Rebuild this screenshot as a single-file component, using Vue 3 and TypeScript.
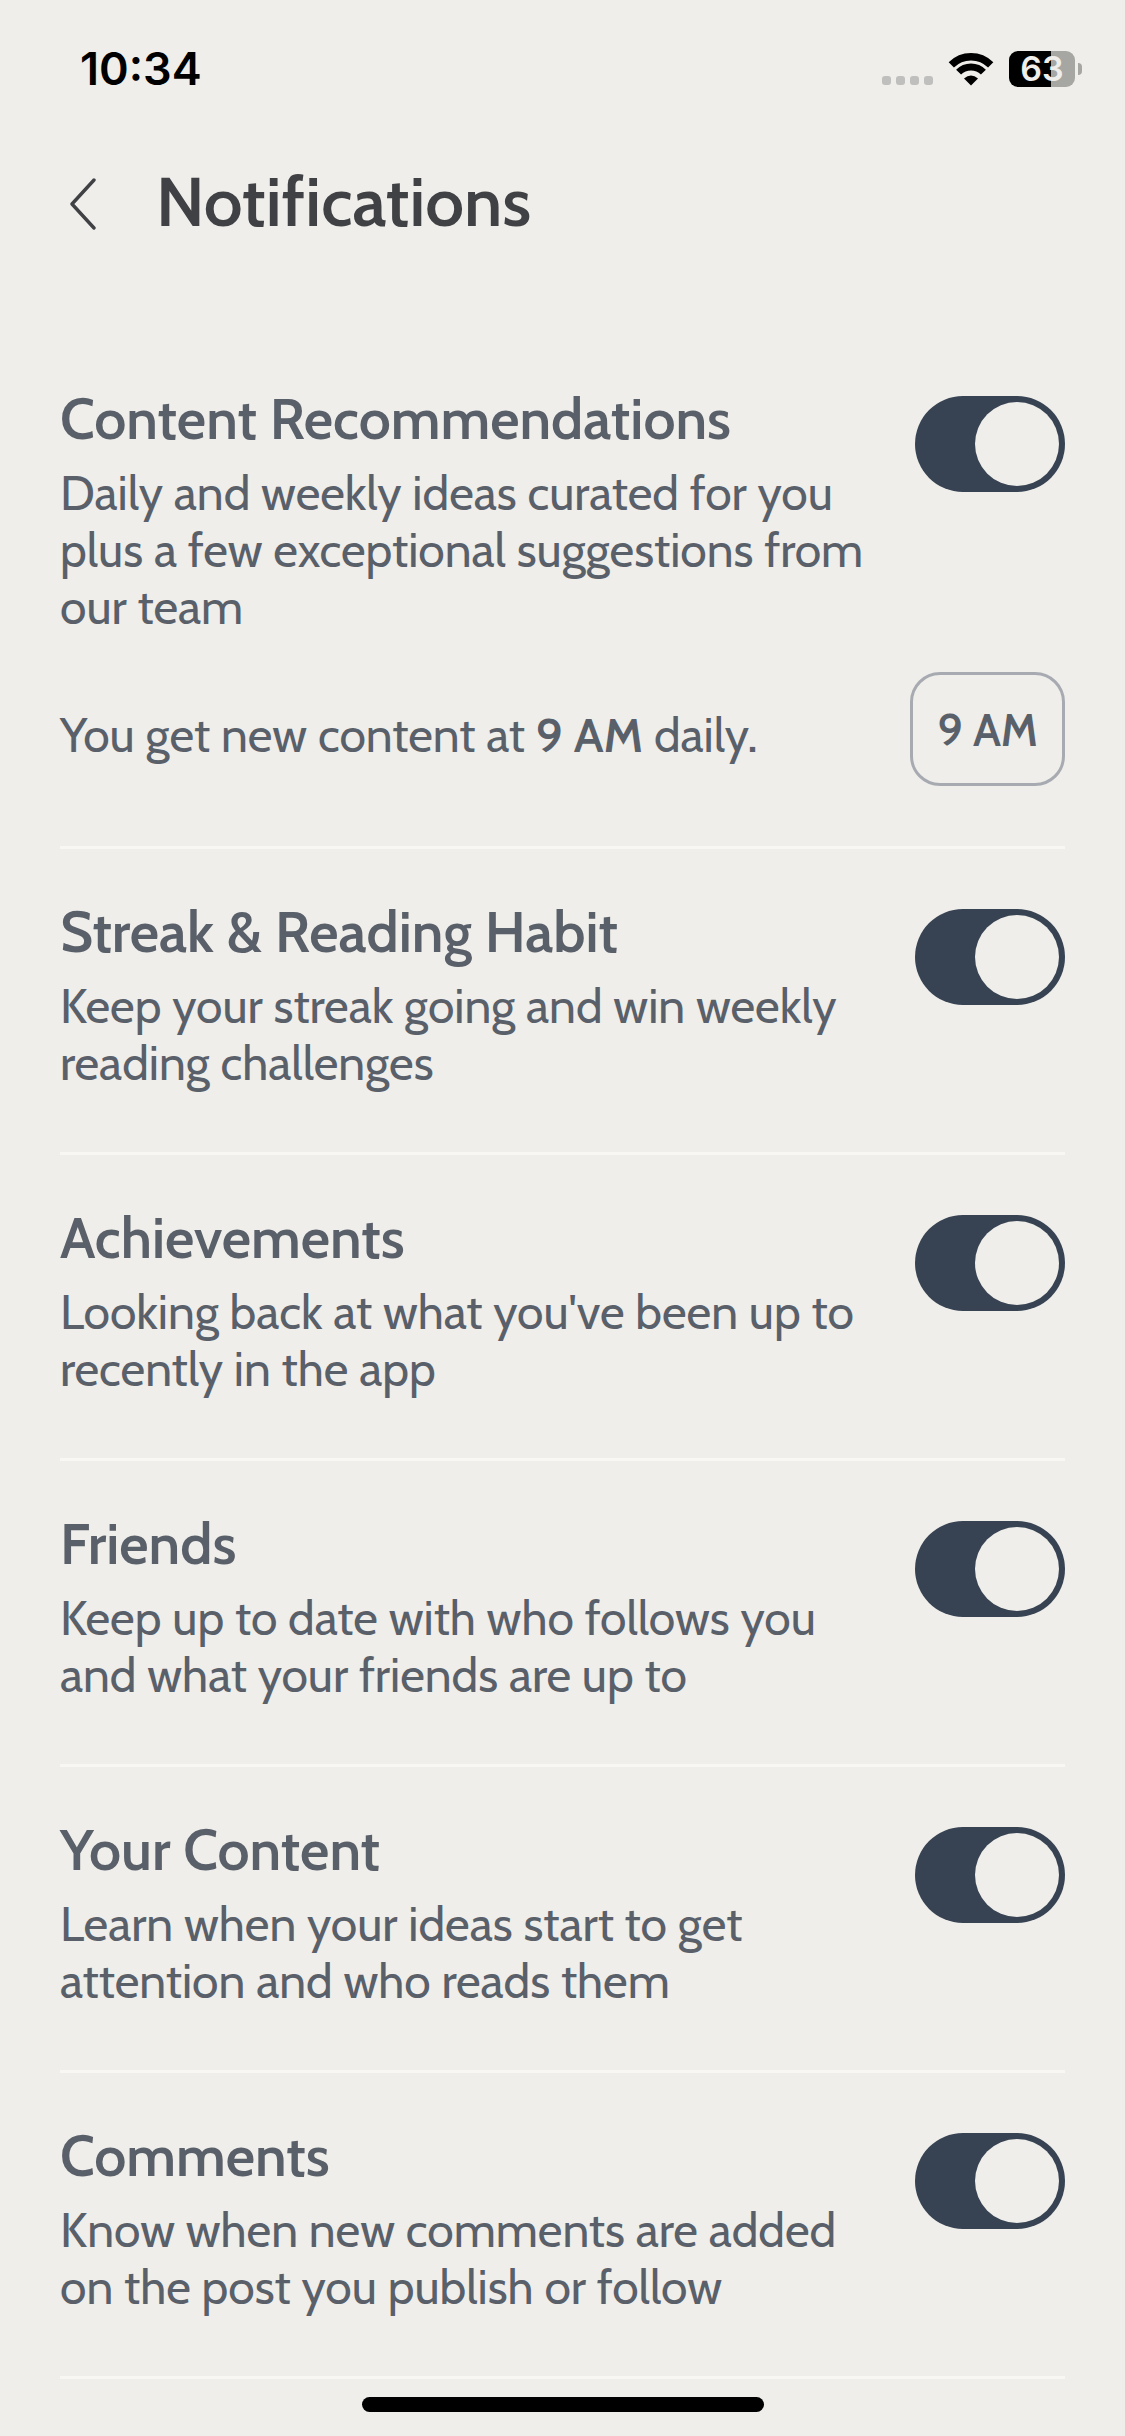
<script setup lang="ts">
import { ref } from 'vue'

interface Setting {
  id: string
  title: string
  description: string
  enabled: boolean
  hour?: string
}

const settings = ref<Setting[]>([
  {
    id: 'recommendations',
    title: 'Content Recommendations',
    description: 'Daily and weekly ideas curated for you plus a few exceptional suggestions from our team',
    enabled: true,
    hour: '9 AM',
  },
  {
    id: 'streak',
    title: 'Streak & Reading Habit',
    description: 'Keep your streak going and win weekly reading challenges',
    enabled: true,
  },
  {
    id: 'achievements',
    title: 'Achievements',
    description: "Looking back at what you've been up to recently in the app",
    enabled: true,
  },
  {
    id: 'friends',
    title: 'Friends',
    description: 'Keep up to date with who follows you and what your friends are up to',
    enabled: true,
  },
  {
    id: 'content',
    title: 'Your Content',
    description: 'Learn when your ideas start to get attention and who reads them',
    enabled: true,
  },
  {
    id: 'comments',
    title: 'Comments',
    description: 'Know when new comments are added on the post you publish or follow',
    enabled: true,
  },
])
</script>

<template>
  <div class="screen">
    <div class="status">
      <time class="clock">10:34</time>
      <div class="indicators">
        <div class="signal"><i></i><i></i><i></i><i></i></div>
        <svg class="wifi" viewBox="0 0 46 34" aria-hidden="true">
          <g fill="none" stroke="#000">
            <path d="M3.3 12.9A27.8 27.8 0 0 1 42.7 12.9" stroke-width="7.4" />
            <path d="M10.6 20.1A17.5 17.5 0 0 1 35.4 20.1" stroke-width="7" />
          </g>
          <path d="M16 26.6Q23 20.6 30 26.6L23 33.6Z" />
        </svg>
        <div class="battery">
          <div class="cell">63</div>
          <div class="nub"></div>
        </div>
      </div>
    </div>

    <header class="header">
      <button class="back" type="button" aria-label="Back">
        <svg viewBox="0 0 26 52" aria-hidden="true">
          <path d="M24 2L2 26L24 50" fill="none" stroke="#404145" stroke-width="3.4" stroke-linecap="round" stroke-linejoin="round" />
        </svg>
      </button>
      <h1>Notifications</h1>
    </header>

    <main class="list">
      <section v-for="item in settings" :key="item.id" class="item">
        <div class="row">
          <div class="copy">
            <h2><label :for="item.id">{{ item.title }}</label></h2>
            <p>{{ item.description }}</p>
          </div>
          <input :id="item.id" v-model="item.enabled" class="toggle" type="checkbox" role="switch" />
        </div>
        <div v-if="item.hour" class="schedule">
          <p>You get new content at <strong>{{ item.hour }}</strong> daily.</p>
          <button class="hour" type="button">{{ item.hour }}</button>
        </div>
      </section>
    </main>

    <div class="home-bar"></div>
  </div>
</template>

<style>
body {
  background: #efeeea;
}
</style>

<style scoped>
.screen {
  box-sizing: border-box;
  min-height: 100vh;
  display: flex;
  flex-direction: column;
  padding-bottom: 24px;
  background: #efeeea;
  color: #5a6069;
  font-family: Cabin, Lato, "Open Sans", sans-serif;
}

h1,
h2,
p {
  margin: 0;
}

.status {
  display: flex;
  align-items: center;
  justify-content: space-between;
  height: 138px;
  padding: 0 43px 0 80px;
  color: #000;
  font-family: Inter, sans-serif;
}

.clock {
  font-size: 45px;
  line-height: 48px;
  font-weight: 600;
}

.indicators {
  display: flex;
  align-items: center;
}

.signal {
  display: flex;
  gap: 5px;
  padding-top: 23px;
  margin-right: 15px;
}

.signal i {
  width: 9px;
  height: 9px;
  border-radius: 3px;
  background: #bfbfbd;
}

.wifi {
  width: 46px;
  height: 34px;
  margin-right: 15px;
}

.battery {
  display: flex;
  align-items: center;
  gap: 3px;
}

.cell {
  width: 66px;
  height: 36px;
  border-radius: 9px;
  background: linear-gradient(to right, #000 42px, #a6a6a3 42px);
  color: #efeeea;
  font-size: 34px;
  line-height: 36px;
  font-weight: 600;
  text-align: center;
}

.nub {
  width: 4px;
  height: 12px;
  border-radius: 0 4px 4px 0;
  background: #a6a6a3;
}

.header {
  display: flex;
  align-items: center;
  gap: 60px;
  height: 132px;
  padding: 0 70px;
}

.back {
  display: flex;
  padding: 0;
  border: 0;
  background: none;
}

.back svg {
  width: 26px;
  height: 52px;
}

h1 {
  padding-bottom: 6px;
  color: #404145;
  font-size: 69px;
  line-height: 80px;
  font-weight: 600;
}

.list {
  padding: 66px 60px 0;
}

.item {
  padding: 60px 0;
  border-bottom: 3px solid #f8f7f4;
}

.row {
  display: flex;
  align-items: flex-start;
  justify-content: space-between;
  gap: 45px;
}

.copy {
  flex: 1;
}

h2 {
  margin-bottom: 23px;
  font-size: 57px;
  line-height: 46px;
  font-weight: 600;
}

p {
  font-size: 48px;
  line-height: 57px;
}

strong {
  font-weight: 600;
}

.toggle {
  appearance: none;
  box-sizing: border-box;
  flex: none;
  display: flex;
  width: 150px;
  height: 96px;
  margin: 0;
  padding: 6px;
  border-radius: 48px;
  background: #9aa1a9;
}

.toggle::before {
  content: "";
  width: 84px;
  height: 84px;
  border-radius: 50%;
  background: #efeeea;
}

.toggle:checked {
  justify-content: flex-end;
  background: #374352;
}

.schedule {
  display: flex;
  align-items: center;
  justify-content: space-between;
  margin-top: 36px;
}

.schedule p {
  padding-top: 12px;
}

.hour {
  height: 114px;
  padding: 2px 24px 0;
  border: 3px solid #a7abb1;
  border-radius: 30px;
  background: none;
  color: inherit;
  font: 600 45px/57px Cabin, Lato, "Open Sans", sans-serif;
}

.home-bar {
  width: 402px;
  height: 15px;
  margin: auto auto 0;
  border-radius: 8px;
  background: #000;
}
</style>
